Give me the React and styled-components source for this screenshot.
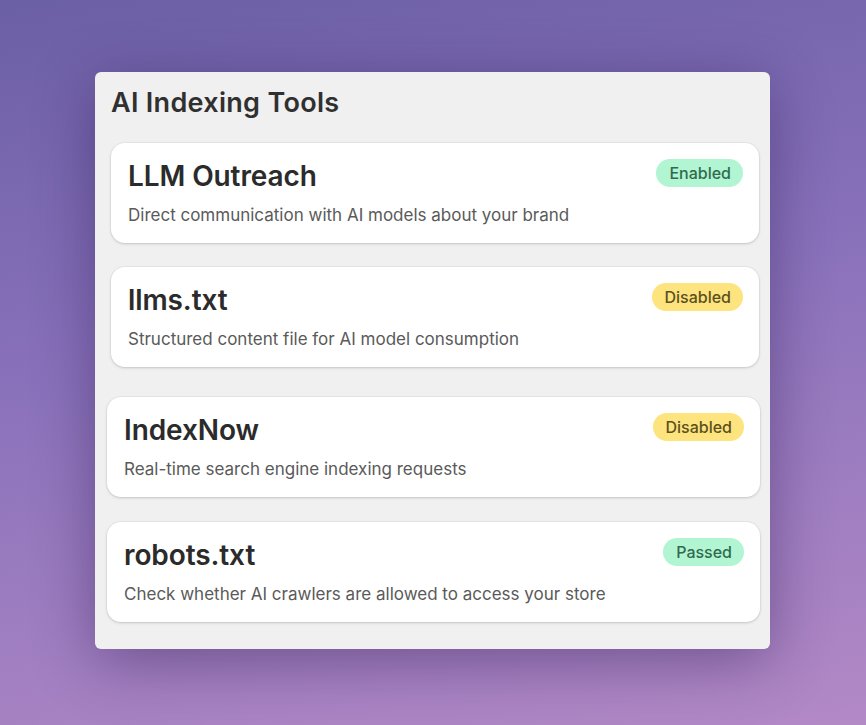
import React from "react";
import styled, { createGlobalStyle } from "styled-components";

const GlobalStyle = createGlobalStyle`
  html, body {
    margin: 0;
    padding: 0;
    height: 100%;
  }
  body {
    font-family: Inter, "Noto Sans", sans-serif;
    background: linear-gradient(170deg, #6b5fa6 0%, #8a72bb 45%, #b389c6 100%);
    min-height: 725px;
  }
`;

const Page = styled.div`
  min-height: 725px;
  box-sizing: border-box;
  padding: 72px 0 0 95px;
`;

const Panel = styled.section`
  width: 675px;
  box-sizing: border-box;
  padding: 16px 11px 27px 16px;
  background: #f0f0f0;
  border-radius: 6px;
  box-shadow: 0 12px 60px rgba(45, 25, 80, 0.45);
`;

const Title = styled.h1`
  margin: 0 0 25px;
  font-size: 27px;
  line-height: 30px;
  font-weight: 600;
  color: #303030;
  letter-spacing: 0.3px;
`;

const List = styled.div`
  display: flex;
  flex-direction: column;
`;

const Card = styled.div`
  margin-top: ${(p) => p.$gap}px;
  margin-left: ${(p) => (p.$nudge ? -4 : 0)}px;
  margin-right: ${(p) => (p.$nudge ? -1 : 0)}px;
  padding: 16px 16px 16px 17px;
  background: #fff;
  border-radius: 14px;
  box-shadow: 0 1px 3px rgba(0, 0, 0, 0.16), 0 0 0 1px rgba(0, 0, 0, 0.03);
  &:first-child {
    margin-top: 0;
  }
`;

const CardHead = styled.div`
  display: flex;
  justify-content: space-between;
  align-items: flex-start;
`;

const CardTitle = styled.h2`
  margin: 0;
  font-size: 28px;
  line-height: 34px;
  font-weight: 600;
  color: #2b2b2b;
  letter-spacing: -0.1px;
`;

const Desc = styled.p`
  margin: 10px 0 0;
  font-size: 17px;
  line-height: 24px;
  color: #5a5a5a;
`;

const badgeColors = {
  Enabled: { bg: "#b2f5d3", fg: "#2f6b4c" },
  Passed: { bg: "#b2f5d3", fg: "#2f6b4c" },
  Disabled: { bg: "#fde47e", fg: "#5b5020" },
};

const Badge = styled.span`
  display: inline-flex;
  align-items: center;
  height: 28px;
  padding: 0 12px 0 13px;
  border-radius: 14px;
  font-size: 16px;
  font-weight: 500;
  background: ${(p) => badgeColors[p.$status].bg};
  color: ${(p) => badgeColors[p.$status].fg};
`;

const tools = [
  { name: "LLM Outreach", desc: "Direct communication with AI models about your brand", status: "Enabled", gap: 0 },
  { name: "llms.txt", desc: "Structured content file for AI model consumption", status: "Disabled", gap: 24 },
  { name: "IndexNow", desc: "Real-time search engine indexing requests", status: "Disabled", gap: 30, nudge: true },
  { name: "robots.txt", desc: "Check whether AI crawlers are allowed to access your store", status: "Passed", gap: 25, nudge: true },
];

export default function App() {
  return (
    <>
      <GlobalStyle />
      <Page>
        <Panel>
          <Title>AI Indexing Tools</Title>
          <List>
            {tools.map((t) => (
              <Card key={t.name} $gap={t.gap} $nudge={t.nudge}>
                <CardHead>
                  <CardTitle>{t.name}</CardTitle>
                  <Badge $status={t.status}>{t.status}</Badge>
                </CardHead>
                <Desc>{t.desc}</Desc>
              </Card>
            ))}
          </List>
        </Panel>
      </Page>
    </>
  );
}
